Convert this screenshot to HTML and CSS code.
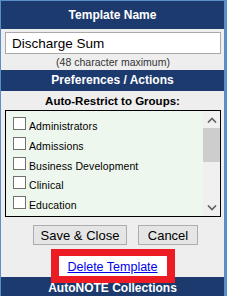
FILE: index.html
```html
<!DOCTYPE html>
<html lang="en">
<head>
    <meta charset="UTF-8">
    <title>Template Name</title>
    <link rel="stylesheet" href="styles.css">
</head>
<body>
    <div class="panel">
        <div class="bar title-bar">Template Name</div>
        <div class="name-section">
            <input type="text" class="name-input" value="Discharge Sum" maxlength="48">
            <div class="hint">(48 character maximum)</div>
        </div>

        <div class="bar section-bar">Preferences / Actions</div>
        <div class="groups-title">Auto-Restrict to Groups:</div>
        <div class="listbox">
            <div class="list">
                <div class="item"><span class="check"></span><span class="label">Administrators</span></div>
                <div class="item"><span class="check"></span><span class="label">Admissions</span></div>
                <div class="item"><span class="check"></span><span class="label">Business Development</span></div>
                <div class="item"><span class="check"></span><span class="label">Clinical</span></div>
                <div class="item"><span class="check"></span><span class="label">Education</span></div>
                <div class="item"><span class="check"></span></div>
            </div>
            <div class="scrollbar">
                <div class="arrow">
                    <svg width="10" height="6" viewBox="0 0 10 6"><polyline points="1,5.5 5,1.5 9,5.5" fill="none" stroke="#606060" stroke-width="1.6"/></svg>
                </div>
                <div class="thumb"></div>
                <div class="track"></div>
                <div class="arrow">
                    <svg width="10" height="6" viewBox="0 0 10 6"><polyline points="1,0.5 5,4.5 9,0.5" fill="none" stroke="#606060" stroke-width="1.6"/></svg>
                </div>
            </div>
        </div>

        <div class="buttons">
            <button class="btn save">Save &amp; Close</button>
            <button class="btn cancel">Cancel</button>
        </div>

        <div class="delete-row">
            <span class="highlight"><a href="#" class="delete-link">Delete Template</a></span>
        </div>

        <div class="bar bottom-bar">AutoNOTE Collections</div>
    </div>
</body>
</html>
```

FILE: styles.css
```css
body {
    margin: 0;
    background-color: #5b8ec6;
    font-family: "Liberation Sans", Arial, sans-serif;
    height: 296px;
    overflow: hidden;
}
.panel {
    margin: 1px 3px 0 1px;
    background-color: #eeeeee;
}
.bar {
    background-color: #1d3a6f;
    color: white;
    font-weight: bold;
    font-size: 12px;
    text-align: center;
}
.title-bar {
    height: 28px;
    line-height: 28px;
}
.name-section {
    padding: 3px 3px 0 4px;
}
.name-input {
    display: block;
    box-sizing: border-box;
    width: 216px;
    height: 22px;
    margin: 0;
    padding: 0 6px;
    border: 1px solid #a9a9a9;
    background: white;
    font-family: "Liberation Sans", Arial, sans-serif;
    font-size: 13.5px;
    color: #000;
    outline: none;
}
.hint {
    height: 16px;
    line-height: 16px;
    font-size: 10.5px;
    color: #333;
    text-align: center;
}
.section-bar {
    height: 21px;
    line-height: 21px;
}
.groups-title {
    height: 19px;
    line-height: 20px;
    font-size: 11.5px;
    font-weight: bold;
    text-align: center;
    color: #000;
}
.listbox {
    display: flex;
    height: 105px;
    margin: 0 3px 0 4px;
    border: 1px solid #000;
    background-color: #eef7ee;
}
.list {
    flex: 1;
    overflow: hidden;
    padding-top: 6px;
}
.item {
    display: flex;
    height: 19.75px;
}
.check {
    box-sizing: border-box;
    width: 13px;
    height: 13px;
    margin: 0 3px 0 7px;
    border: 1px solid #707070;
    background: white;
    flex-shrink: 0;
}
.label {
    padding-top: 3px;
    font-size: 10.5px;
    line-height: 13px;
    letter-spacing: 0.1px;
    color: #000;
}
.scrollbar {
    display: flex;
    flex-direction: column;
    width: 17px;
    background-color: #f0f0f0;
}
.arrow {
    height: 17px;
    display: flex;
    align-items: center;
    justify-content: center;
}
.thumb {
    height: 34px;
    background-color: #cdcdcd;
}
.track {
    flex: 1;
}
.buttons {
    display: flex;
    justify-content: center;
    gap: 11px;
    padding: 8px 0 0 6px;
}
.btn {
    box-sizing: border-box;
    height: 20px;
    padding: 0;
    border: 1px solid #adadad;
    background-color: #e5e5e5;
    font-family: "Liberation Sans", Arial, sans-serif;
    font-size: 13px;
    color: #000;
}
.save {
    width: 94px;
}
.cancel {
    width: 60px;
}
.delete-row {
    display: flex;
    justify-content: center;
    padding-top: 4px;
    margin-bottom: -6px;
    position: relative;
    z-index: 1;
}
.highlight {
    display: block;
    width: 108px;
    height: 20px;
    border: solid #ed1c24;
    border-width: 7px 8px;
    background-color: #ffffff;
    text-align: center;
    line-height: 20px;
}
.delete-link {
    font-size: 12.5px;
    color: #0000ee;
}
.bottom-bar {
    height: 22px;
    line-height: 22px;
}
```
